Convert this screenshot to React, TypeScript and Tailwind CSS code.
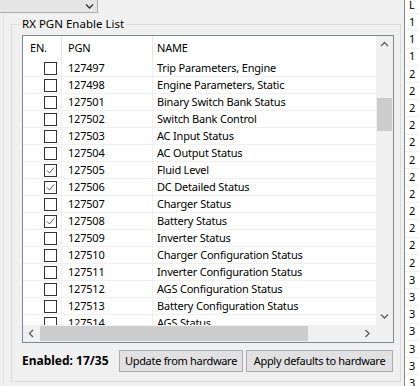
import { ReactNode } from 'react'

interface PgnRow {
  pgn: string
  name: string
  enabled: boolean
}

const rows: PgnRow[] = [
  { pgn: '127497', name: 'Trip Parameters, Engine', enabled: false },
  { pgn: '127498', name: 'Engine Parameters, Static', enabled: false },
  { pgn: '127501', name: 'Binary Switch Bank Status', enabled: false },
  { pgn: '127502', name: 'Switch Bank Control', enabled: false },
  { pgn: '127503', name: 'AC Input Status', enabled: false },
  { pgn: '127504', name: 'AC Output Status', enabled: false },
  { pgn: '127505', name: 'Fluid Level', enabled: true },
  { pgn: '127506', name: 'DC Detailed Status', enabled: true },
  { pgn: '127507', name: 'Charger Status', enabled: false },
  { pgn: '127508', name: 'Battery Status', enabled: true },
  { pgn: '127509', name: 'Inverter Status', enabled: false },
  { pgn: '127510', name: 'Charger Configuration Status', enabled: false },
  { pgn: '127511', name: 'Inverter Configuration Status', enabled: false },
  { pgn: '127512', name: 'AGS Configuration Status', enabled: false },
  { pgn: '127513', name: 'Battery Configuration Status', enabled: false },
  { pgn: '127514', name: 'AGS Status', enabled: false }
]

// first digits of the list that sits next to the group box
const sideRows = ['L', '1', '1', '1', '2', '2', '2', '2', '2', '2', '2', '2', '2', '2', '2', '2', '3', '3', '3', '3', '3', '3', '3']

type Dir = 'up' | 'down' | 'left' | 'right'

function Arrow({ dir, className = 'stroke-[#606060]' }: { dir: Dir; className?: string }) {
  const points = {
    up: '1,5 4.5,1.5 8,5',
    down: '1,1.5 4.5,5 8,1.5',
    left: '5,1 1.5,4.5 5,8',
    right: '1.5,1 5,4.5 1.5,8'
  }[dir]
  const size = dir === 'up' || dir === 'down' ? 'h-[7px] w-[9px]' : 'h-[9px] w-[7px]'
  const box = dir === 'up' || dir === 'down' ? '0 0 9 7' : '0 0 7 9'

  return (
    <svg viewBox={box} className={size} fill="none">
      <polyline points={points} className={className} strokeWidth={1.4} />
    </svg>
  )
}

function Checkbox({ checked }: { checked: boolean }) {
  return (
    <span className="flex h-[13px] w-[13px] items-center justify-center border border-[#333333] bg-white">
      {checked && (
        <svg viewBox="0 0 11 11" className="h-[11px] w-[11px]" fill="none">
          <polyline points="2,5.5 4.5,8 9,2.5" stroke="#5a5a5a" strokeWidth={1} />
        </svg>
      )}
    </span>
  )
}

function Cell({ width, children, className = '' }: { width: string; children?: ReactNode; className?: string }) {
  return <div className={`flex shrink-0 items-center ${width} ${className}`}>{children}</div>
}

function PgnList() {
  return (
    <div className="mt-[3px] flex h-[308px] w-[372px] flex-col border border-[#828790] bg-white">
      <div className="flex h-[289px]">
        <div className="w-[353px] overflow-hidden tracking-[-0.2px]">
          <div className="flex h-[24px] w-[422px]">
            <Cell width="w-[39px]" className="border-r border-[#e5e5e5] pl-[7px]">EN.</Cell>
            <Cell width="w-[91px]" className="border-r border-[#e5e5e5] pl-[6px]">PGN</Cell>
            <Cell width="w-[292px]" className="pl-[4px]">NAME</Cell>
          </div>
          {rows.map(row => (
            <div key={row.pgn} className="flex h-[17px] w-[422px] border-b border-[#f0f0f0]">
              <Cell width="w-[39px]" className="border-r border-[#f0f0f0] pl-[21px]">
                <Checkbox checked={row.enabled} />
              </Cell>
              <Cell width="w-[91px]" className="border-r border-[#f0f0f0] pl-[6px]">{row.pgn}</Cell>
              <Cell width="w-[292px]" className="pl-[4px] whitespace-nowrap">{row.name}</Cell>
            </div>
          ))}
        </div>

        <div className="flex w-[17px] flex-col bg-[#f0f0f0]">
          <div className="flex h-[17px] items-center justify-center">
            <Arrow dir="up" />
          </div>
          <div className="flex-1">
            <div className="mx-[1px] mt-[45px] h-[33px] bg-[#cdcdcd]" />
          </div>
          <div className="flex h-[17px] items-center justify-center">
            <Arrow dir="down" />
          </div>
        </div>
      </div>

      <div className="flex h-[17px] bg-[#f0f0f0]">
        <div className="flex w-[17px] items-center justify-center">
          <Arrow dir="left" />
        </div>
        <div className="flex-1 py-[1px]">
          <div className="h-full w-[268px] bg-[#cdcdcd]" />
        </div>
        <div className="flex w-[17px] items-center justify-center">
          <Arrow dir="right" />
        </div>
        <div className="w-[17px] bg-[#f0f0f0]" />
      </div>
    </div>
  )
}

export default function App() {
  return (
    <div className="flex h-[386px] w-[419px] overflow-hidden bg-[#f0f0f0] font-['Noto_Sans',sans-serif] text-[11px] text-black">
      <div className="flex w-[404px] shrink-0 flex-col">
        <div className="flex h-[13px] w-[98px] items-center justify-end border-r border-b border-[#adadad] bg-[#e5e5e5] pr-[3px]">
          <Arrow dir="down" className="stroke-[#333333]" />
        </div>

        <div className="flex flex-1">
          <div className="w-[11px] shrink-0 pl-[3px]">
            <div className="h-full w-px bg-[#e6e6e6]" />
          </div>

          <fieldset className="mt-[3px] h-[366px] w-[390px] border border-[#dcdcdc] pr-[6px] pb-[9px] pl-[10px]">
            <legend className="ml-[-2px] px-[2px] text-[11.5px] leading-[16px]">RX PGN Enable List</legend>

            <PgnList />

            <div className="mt-[7px] flex h-[22px] items-center gap-[3px]">
              <span className="w-[94px] text-[12px] font-bold">Enabled: 17/35</span>
              <button type="button" className="h-[22px] w-[124px] border border-[#adadad] bg-[#e1e1e1] tracking-[-0.3px]">
                Update from hardware
              </button>
              <button type="button" className="h-[22px] w-[147px] border border-[#adadad] bg-[#e1e1e1] tracking-[-0.3px]">
                Apply defaults to hardware
              </button>
            </div>
          </fieldset>
        </div>
      </div>

      <div className="flex-1 overflow-hidden border-l border-[#828790] bg-white">
        <div className="mt-[-3px]">
          {sideRows.map((digit, index) => (
            <div key={index} className="flex h-[17.2px] items-center border-b border-[#f0f0f0] pl-[4px]">
              {digit}
            </div>
          ))}
        </div>
      </div>
    </div>
  )
}
